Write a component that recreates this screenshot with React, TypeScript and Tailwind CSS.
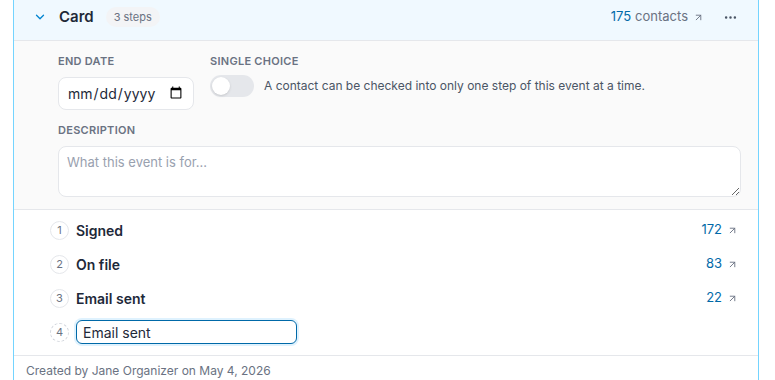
import { ChevronDown, ArrowUpRight, MoreHorizontal } from "lucide-react";

const steps = [
  { n: 1, name: "Signed", count: 172 },
  { n: 2, name: "On file", count: 83 },
  { n: 3, name: "Email sent", count: 22 },
];

export default function App() {
  return (
    <div className="h-[380px] overflow-hidden bg-white font-['Inter',sans-serif] text-gray-800">
      <div className="ml-[13px] -mt-[6px] w-[746px] border-x border-x-sky-300">
        {/* Header */}
        <div className="flex h-[47px] items-center border-b border-gray-200 bg-sky-50 pl-[19px] pr-[20px]">
          <ChevronDown className="h-[14px] w-[14px] text-sky-600" strokeWidth={2.25} />
          <span className="ml-[12px] text-[15px] font-semibold text-gray-800">Card</span>
          <span className="ml-[12px] rounded-full bg-gray-100 px-[8px] py-[2px] text-[11px] text-gray-500">3 steps</span>
          <div className="ml-auto flex items-center text-[13px]">
            <span className="text-sky-700">175</span>
            <span className="ml-[4px] text-gray-500">contacts</span>
            <ArrowUpRight className="ml-[5px] h-[11px] w-[11px] text-gray-500" />
          </div>
          <MoreHorizontal className="ml-[19px] h-[15px] w-[15px] text-gray-600" />
        </div>

        {/* Form */}
        <div className="border-b border-gray-200 bg-[#fafafa] pb-[12px] pl-[44px] pr-[17px] pt-[12px]">
          <div className="flex">
            <div className="flex flex-col">
              <label className="text-[11px] font-semibold uppercase tracking-wide text-gray-500">End date</label>
              <input
                type="date"
                className="mt-[7px] h-[33px] w-[136px] rounded-lg border border-gray-200 bg-white px-[8px] text-[14px] text-gray-800"
              />
            </div>
            <div className="ml-[16px] flex flex-col">
              <label className="text-[11px] font-semibold uppercase tracking-wide text-gray-500">Single choice</label>
              <div className="mt-[5px] flex items-center">
                <div className="flex h-[22px] w-[44px] items-center rounded-full bg-gray-200 px-[2px]">
                  <div className="h-[18px] w-[18px] rounded-full bg-white shadow" />
                </div>
                <span className="ml-[10px] text-[12px] text-gray-600">
                  A contact can be checked into only one step of this event at a time.
                </span>
              </div>
            </div>
          </div>
          <label className="mt-[12px] block text-[11px] font-semibold uppercase tracking-wide text-gray-500">Description</label>
          <textarea
            placeholder="What this event is for..."
            className="mt-[8px] block h-[51px] w-full rounded-lg border border-gray-200 bg-white px-[8px] py-[6px] text-[13px] placeholder:text-gray-400"
          />
        </div>

        {/* Steps */}
        <div className="flex flex-col gap-[14px] pb-[13px] pl-[36px] pr-[20px] pt-[10px]">
          {steps.map((s) => (
            <div key={s.n} className="flex h-[20px] items-center">
              <span className="flex h-[19px] w-[19px] items-center justify-center rounded-full border border-gray-200 text-[11px] text-gray-500">
                {s.n}
              </span>
              <span className="ml-[7px] text-[14px] font-semibold text-gray-800">{s.name}</span>
              <span className="ml-auto text-[13px] text-sky-700">{s.count}</span>
              <ArrowUpRight className="ml-[5px] h-[11px] w-[11px] text-gray-500" />
            </div>
          ))}
          <div className="flex h-[20px] items-center">
            <span className="flex h-[19px] w-[19px] items-center justify-center rounded-full border border-dashed border-gray-300 text-[11px] text-gray-500">
              4
            </span>
            <input
              defaultValue="Email sent"
              className="ml-[7px] h-[24px] w-[221px] rounded-md border-[1.5px] border-sky-700 bg-white px-[6px] text-[14px] text-gray-800 outline-none ring-2 ring-sky-100"
            />
          </div>
        </div>

        {/* Footer */}
        <div className="border-t border-gray-200 px-[12px] py-[6px] text-[12px] text-gray-500">
          Created by Jane Organizer on May 4, 2026
        </div>
      </div>
    </div>
  );
}
